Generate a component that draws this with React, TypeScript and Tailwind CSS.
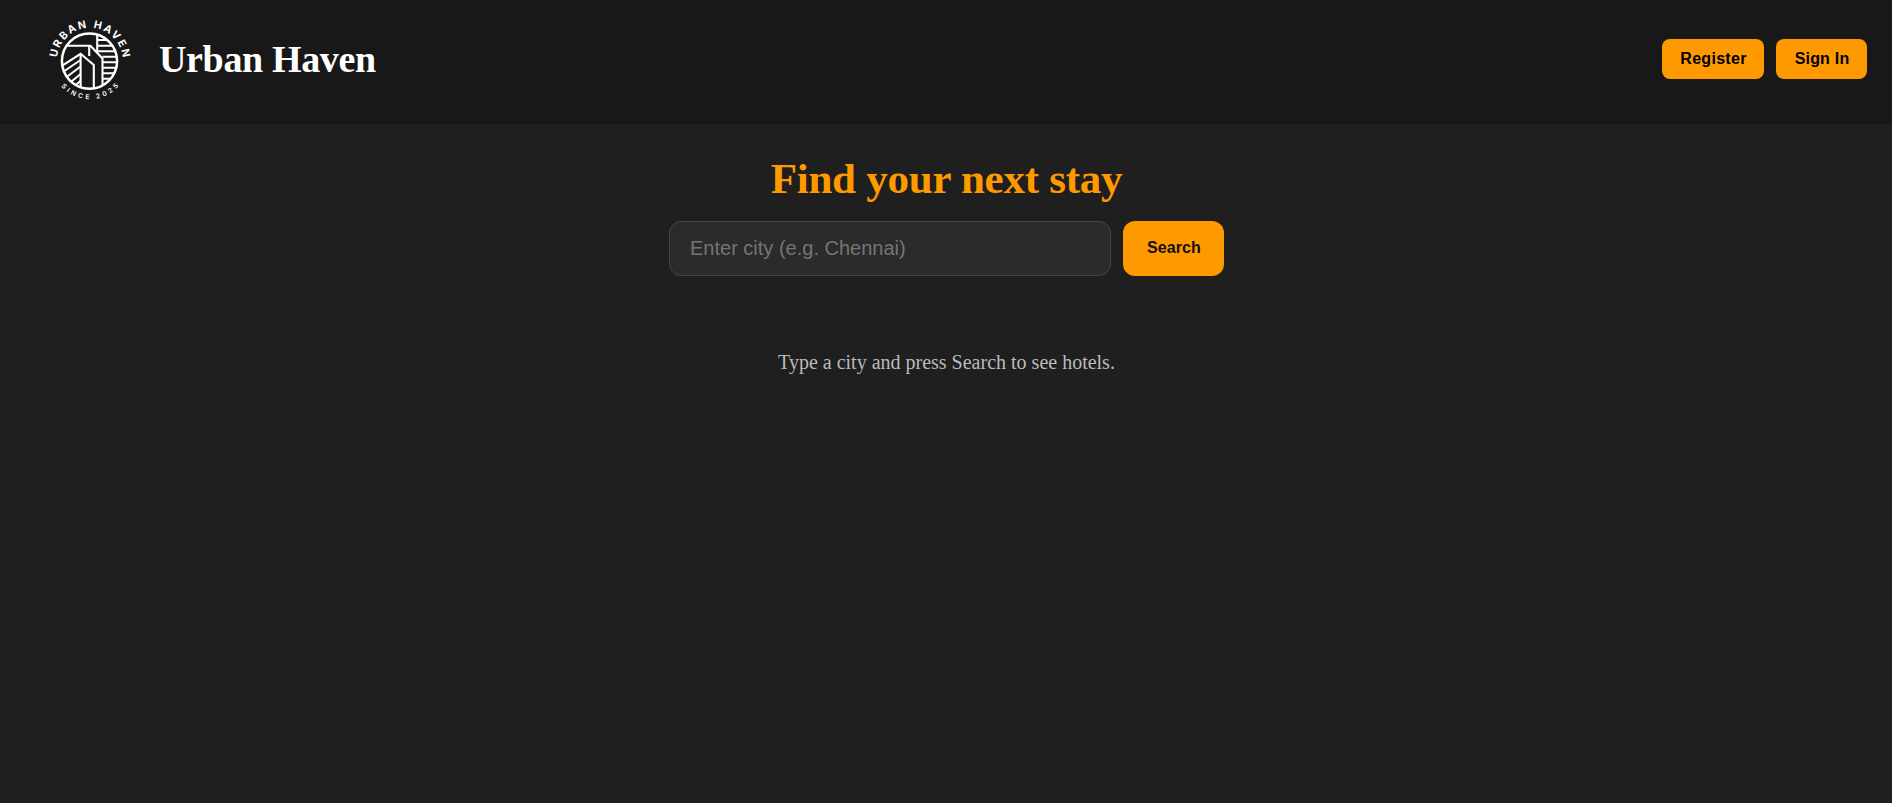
import React from "react";

function Logo() {
  return (
    <svg viewBox="0 0 120 120" className="h-[120px] w-[120px]" fill="none" role="img" aria-label="Urban Haven logo">
      <defs>
        <path id="logo-top" d="M 26.7 61 A 33.1 33.1 0 0 1 92.9 61" />
        <path id="logo-bottom" d="M 21.6 61 A 38.2 38.2 0 0 0 98 61" />
        <clipPath id="logo-disc">
          <circle cx="59.5" cy="61.1" r="27.5" />
        </clipPath>
      </defs>
      <circle cx="59.5" cy="61.1" r="27.6" stroke="#fff" strokeWidth="2.5" />
      <g clipPath="url(#logo-disc)" stroke="#fff" strokeWidth="2.1">
        <path d="M34 45.8H60.5L72.5 58.5V90" />
        <path d="M59.2 45.8V56" />
        <path d="M30 67L50.6 53.8L63.8 65V90" />
        <path d="M50.6 53.8V90" />
        <path d="M30 74L50.6 60M32 80.5L50.6 66.5M34 87.5L50.6 74M40 90L50.6 80.8" strokeWidth="1.9" />
        <path d="M67.2 33V52.5" />
        <path d="M67.2 40H88M67.2 45.7H90M68 51.2H90M72.5 56.8H90M72.5 62.3H90M72.5 67.8H90M72.5 73.3H90M72.5 78.8H90" strokeWidth="1.9" />
      </g>
      <text fill="#fff" fontFamily="Inter, sans-serif" fontWeight="700" fontSize="10.6" textLength="97" textAnchor="middle">
        <textPath href="#logo-top" startOffset="50%">URBAN HAVEN</textPath>
      </text>
      <text fill="#fff" fontFamily="Inter, sans-serif" fontWeight="600" fontSize="6.7" textLength="65" textAnchor="middle">
        <textPath href="#logo-bottom" startOffset="50%">SINCE 2025</textPath>
      </text>
    </svg>
  );
}

function HeaderButton({ children, className }: { children: React.ReactNode; className: string }) {
  return (
    <button
      className={`h-10 rounded-lg bg-[#ff9900] pb-px pl-px font-['Liberation_Sans',Arial,sans-serif] text-base font-bold text-black ${className}`}
    >
      {children}
    </button>
  );
}

export default function App() {
  return (
    <div className="min-h-screen bg-[#1f1f1f] font-['Liberation_Serif','Times_New_Roman',serif]">
      <header className="flex h-[124px] items-start justify-between bg-[#181818] pr-[25px] pl-[30px]">
        <div className="flex h-[120px] items-center gap-[9px]">
          <Logo />
          <h1 className="pb-[2px] text-[38px] leading-none font-bold tracking-[-0.35px] text-white">Urban Haven</h1>
        </div>
        <nav className="mt-[39px] flex gap-3">
          <HeaderButton className="w-[102px] tracking-[0.3px]">Register</HeaderButton>
          <HeaderButton className="w-[91px] tracking-[0.2px]">Sign In</HeaderButton>
        </nav>
      </header>
      <main className="flex flex-col items-center pt-[29px] pl-px">
        <h2 className="text-[43px] leading-[51px] font-bold tracking-[-0.25px] text-[#ff9900]">Find your next stay</h2>
        <form className="mt-[17px] flex gap-3" onSubmit={(e) => e.preventDefault()}>
          <input
            placeholder="Enter city (e.g. Chennai)"
            className="h-[55px] w-[442px] rounded-xl border border-[#444] bg-[#2b2b2b] px-5 font-['Liberation_Sans',Arial,sans-serif] text-[20px] text-white outline-none placeholder:text-[#757575]"
          />
          <button className="h-[55px] w-[101px] rounded-xl bg-[#ff9900] pb-[2px] pl-px font-['Liberation_Sans',Arial,sans-serif] text-base font-bold tracking-[0.1px] text-[#111]">
            Search
          </button>
        </form>
        <p className="mt-[75px] text-[20px] leading-[23px] text-[#bbb]">Type a city and press Search to see hotels.</p>
      </main>
    </div>
  );
}
